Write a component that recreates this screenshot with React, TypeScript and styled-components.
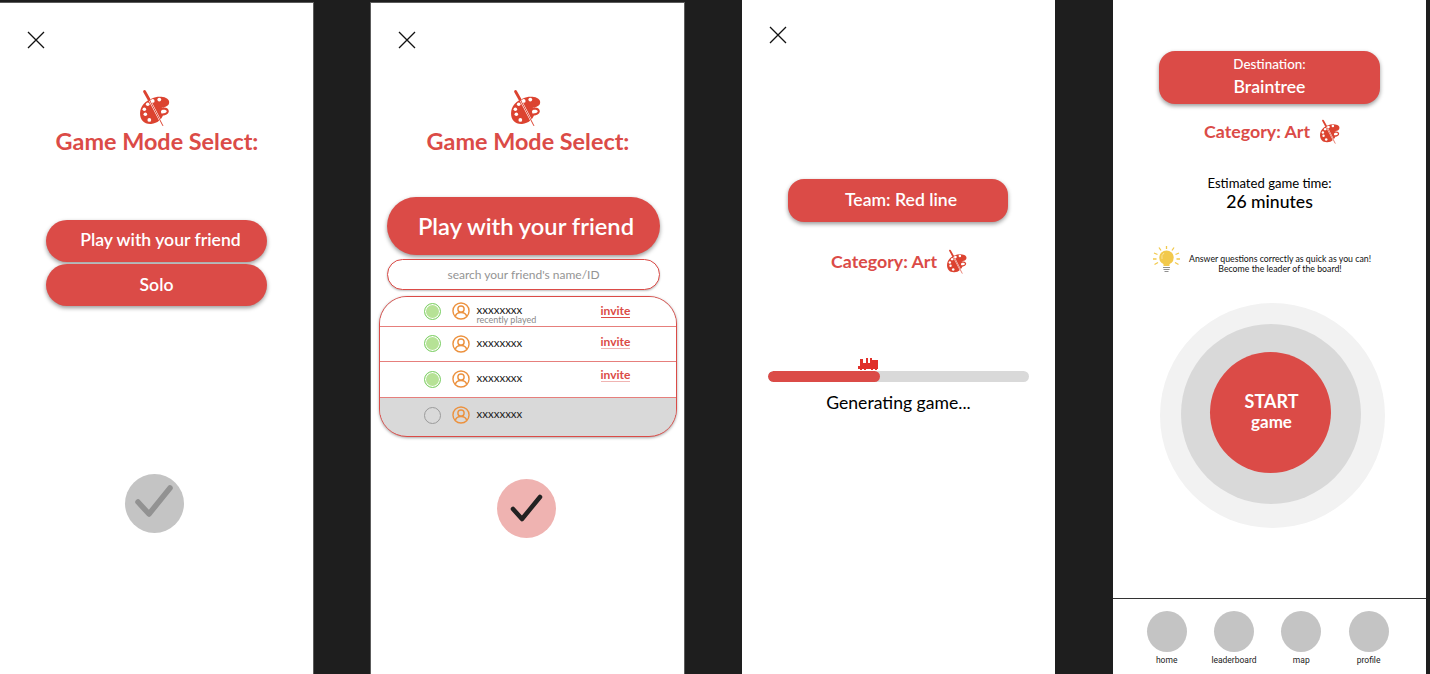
import styled, { createGlobalStyle } from "styled-components";

const RED = "#db4b47";

const GlobalStyle = createGlobalStyle`
  html, body {
    margin: 0;
    height: 674px;
    overflow: hidden;
    background: #1e1e1e;
    font-family: Lato, "Open Sans", sans-serif;
  }
`;

const Board = styled.div`
  display: flex;
  gap: 58px;
  width: 1430px;
  height: 674px;
  overflow: hidden;
`;

const Frame = styled.section<{ $top?: number }>`
  display: flex;
  flex-direction: column;
  width: 313px;
  height: ${(p) => 674 - (p.$top ?? 0)}px;
  margin-top: ${(p) => p.$top ?? 0}px;
  background: #fff;
  flex-shrink: 0;
  box-shadow: ${(p) => (p.$top ? "0 0 0 1px #5c5c5c" : "none")};
`;

const Close = styled.svg<{ $top: number }>`
  display: block;
  width: 18px;
  height: 18px;
  margin: ${(p) => p.$top}px 0 0 27px;
  flex-shrink: 0;
`;

const PaletteBox = styled.svg<{ $size: number; $nudge?: number }>`
  display: block;
  width: ${(p) => p.$size}px;
  height: ${(p) => p.$size * 1.23}px;
  margin-right: ${(p) => p.$nudge ?? 0}px;
  flex-shrink: 0;
`;

const Heading = styled.h1`
  margin: 0;
  font-size: 23.4px;
  line-height: 30px;
  font-weight: 700;
  color: ${RED};
  text-align: center;
`;

const Centered = styled.div<{ $top: number; $left?: number }>`
  display: flex;
  flex-direction: column;
  align-items: center;
  margin-top: ${(p) => p.$top}px;
  margin-left: ${(p) => p.$left ?? 0}px;
`;

const RedButton = styled.button<{
  $w: number;
  $h: number;
  $size?: number;
  $radius?: number;
  $lift?: number;
  $nudge?: number;
  $textShift?: number;
}>`
  display: flex;
  flex-direction: column;
  align-items: center;
  justify-content: center;
  width: ${(p) => p.$w}px;
  height: ${(p) => p.$h}px;
  margin-right: ${(p) => p.$nudge ?? 0}px;
  padding: 0 0 ${(p) => p.$lift ?? 0}px ${(p) => p.$textShift ?? 0}px;
  border: 0;
  border-radius: ${(p) => p.$radius ?? p.$h / 2}px;
  background: ${RED};
  color: #fff;
  font-family: inherit;
  font-size: ${(p) => p.$size ?? 17.6}px;
  font-weight: 600;
  box-shadow: 0 2px 4px rgba(0, 0, 0, 0.4);
`;

const Stack = styled.div`
  display: flex;
  flex-direction: column;
  gap: 2px;
`;

const CheckCircle = styled.div<{ $bg: string; $top: number; $nudge: number }>`
  width: 59px;
  height: 59px;
  margin-top: ${(p) => p.$top}px;
  margin-right: ${(p) => p.$nudge}px;
  border-radius: 50%;
  background: ${(p) => p.$bg};
`;

const Search = styled.div`
  display: flex;
  align-items: center;
  justify-content: center;
  width: 273px;
  height: 31px;
  box-sizing: border-box;
  margin: 4px 8px 0 0;
  border: 1px solid ${RED};
  border-radius: 16px;
  background: #fff;
  color: #949494;
  font-size: 12px;
  box-shadow: 0 1px 2px rgba(0, 0, 0, 0.25);
`;

const FriendList = styled.div`
  width: 298px;
  height: 141px;
  box-sizing: border-box;
  margin-top: 6px;
  border: 1px solid ${RED};
  border-radius: 28px;
  background: #d9d9d9;
  overflow: hidden;
  box-shadow: 0 1px 3px rgba(0, 0, 0, 0.35);
`;

const Row = styled.div<{ $h: number; $off?: boolean }>`
  display: flex;
  align-items: center;
  height: ${(p) => p.$h}px;
  box-sizing: border-box;
  padding-left: 44px;
  background: ${(p) => (p.$off ? "#d9d9d9" : "#fff")};
  border-bottom: ${(p) => (p.$off ? "0" : "1.5px solid #e67f7c")};
`;

const Dot = styled.span<{ $on?: boolean }>`
  width: 15px;
  height: 15px;
  border-radius: 50%;
  flex-shrink: 0;
  border: 1px solid ${(p) => (p.$on ? "#7fd06a" : "#9a9a9a")};
  background: ${(p) => (p.$on ? "#b6e296" : "transparent")};
  box-shadow: ${(p) => (p.$on ? "inset 0 0 0 1px #fff" : "none")};
`;

const Avatar = styled.svg`
  width: 18px;
  height: 18px;
  margin-left: 11px;
  flex-shrink: 0;
`;

const NameBlock = styled.div<{ $recent?: boolean }>`
  display: flex;
  flex-direction: column;
  width: 124px;
  margin-left: 7px;
  flex-shrink: 0;
  padding: ${(p) => (p.$recent ? "7px 0 0" : "0 0 2px")};
`;

const Name = styled.span`
  font-size: 11.5px;
  line-height: 10px;
  color: #222;
`;

const Recent = styled.span`
  font-size: 9px;
  line-height: 10px;
  color: #8a8a8a;
`;

const Invite = styled.span<{ $line: string; $shift: number }>`
  font-size: 12px;
  line-height: 12px;
  font-weight: 700;
  color: ${RED};
  border-bottom: 1px solid ${(p) => p.$line};
  transform: translateY(${(p) => p.$shift}px);
`;

const CategoryRow = styled.div<{ $top: number; $left: number }>`
  display: flex;
  align-items: center;
  gap: 10px;
  margin-top: ${(p) => p.$top}px;
  margin-left: ${(p) => p.$left}px;
`;

const CategoryText = styled.span`
  font-size: 17.8px;
  line-height: 22px;
  font-weight: 700;
  color: ${RED};
`;

const TrackArea = styled.div`
  display: flex;
  flex-direction: column;
  width: 261px;
  margin: 84px 0 0 26px;
`;

const Train = styled.svg`
  display: block;
  width: 20px;
  height: 13px;
  margin-left: 90px;
`;

const Track = styled.div`
  height: 11px;
  border-radius: 6px;
  background: #d9d9d9;
  overflow: hidden;
`;

const TrackFill = styled.div`
  height: 100%;
  border-radius: 6px;
  background: ${RED};
`;

const Generating = styled.div`
  margin-top: 10px;
  font-size: 17.6px;
  line-height: 22px;
  color: #000;
  text-align: center;
`;

const Small = styled.span`
  margin-bottom: 4px;
  font-size: 13.4px;
  line-height: 16px;
  font-weight: 500;
`;

const TimeBlock = styled.div`
  display: flex;
  flex-direction: column;
  align-items: center;
  margin: 30px 0 0 0;
  color: #000;
  font-size: 13.1px;
  line-height: 18px;
`;

const TimeValue = styled.strong`
  font-size: 17.6px;
  line-height: 20px;
  font-weight: 500;
`;

const Tip = styled.div`
  display: flex;
  align-items: flex-start;
  gap: 9px;
  margin: 34px 0 0 40px;
`;

const TipText = styled.p`
  margin: 0;
  padding-top: 8px;
  font-size: 8.75px;
  line-height: 10px;
  color: #111;
  text-align: center;
`;

const Ring = styled.div<{ $size: number; $bg: string }>`
  display: flex;
  align-items: center;
  justify-content: center;
  width: ${(p) => p.$size}px;
  height: ${(p) => p.$size}px;
  flex-shrink: 0;
  border-radius: 50%;
  background: ${(p) => p.$bg};
`;

const OuterRing = styled(Ring)`
  margin: 29px 0 0 47px;
`;

const MiddleRing = styled(Ring)`
  margin: 0 3px 3px 0;
`;

const Start = styled(Ring)`
  flex-direction: column;
  margin: 0 1px 3px 0;
  padding: 0 0 2px 2px;
  box-sizing: border-box;
  color: #fff;
  font-size: 18px;
  line-height: 22px;
  font-weight: 700;
`;

const StartSmall = styled.span`
  font-size: 17px;
  line-height: 20px;
`;

const Nav = styled.nav`
  display: flex;
  gap: 27.3px;
  margin-top: auto;
  height: 76px;
  padding: 12px 0 0 33.7px;
  box-sizing: border-box;
  border-top: 1px solid #333;
`;

const NavItem = styled.div`
  display: flex;
  flex-direction: column;
  align-items: center;
  width: 40px;
`;

const NavDot = styled.span`
  width: 40px;
  height: 41px;
  border-radius: 50%;
  background: #c4c4c4;
  flex-shrink: 0;
`;

const NavLabel = styled.span`
  margin-top: 3px;
  font-family: Roboto, sans-serif;
  font-size: 8.5px;
  line-height: 11px;
  color: #222;
  white-space: nowrap;
`;

function CloseIcon({ top }: { top: number }) {
  return (
    <Close $top={top} viewBox="0 0 18 18" fill="none" stroke="#111" strokeWidth="1.3">
      <path d="M1 1l16 16M17 1L1 17" />
    </Close>
  );
}

function Palette({ size, nudge }: { size: number; nudge?: number }) {
  return (
    <PaletteBox $size={size} $nudge={nudge} viewBox="0 0 30 37">
      <path
        fill="#dc4330"
        fillRule="evenodd"
        d="M12 9.500C16 7.500 22 7.400 26 9c3 1.200 4 4 2.700 6.500-1.300 2.300-4.500 2.500-7.200 3 3-.4 6.800.6 7.300 3.200.5 2.800-2.800 4.400-5.800 5-1.500 3.500-5 8-12 8.300C4 35.300 0 31 0 24.500 0 17 5.500 12 12 9.500zM22 21c-1.500.6-1 2.300-.5 3.600 2.200.2 5-.6 5.300-2.200.2-1.500-3-2-4.800-1.400z"
      />
      <path stroke="#fff" strokeWidth="2" d="M9 10l14 27" />
      <path stroke="#dc4330" strokeWidth="1" d="M9 10l14 27" fill="none" />
      <path stroke="#dc4330" strokeWidth="2.800" strokeLinecap="round" d="M4.500 2.500L9 10.500" />
      <g fill="#fff">
        <circle cx="19.300" cy="10.600" r="1.900" />
        <circle cx="12.700" cy="12" r="1.900" />
        <circle cx="7.700" cy="15.300" r="1.800" />
        <circle cx="4.300" cy="20.300" r="1.800" />
        <circle cx="5.300" cy="25.300" r="1.800" />
        <circle cx="9.300" cy="31" r="1.900" />
      </g>
    </PaletteBox>
  );
}

function Check({ color, d, width }: { color: string; d: string; width: number }) {
  return (
    <svg width="59" height="59" viewBox="0 0 59 59" fill="none">
      <path
        d={d}
        stroke={color}
        strokeWidth={width}
        strokeLinecap="round"
        strokeLinejoin="round"
      />
    </svg>
  );
}

function UserIcon() {
  return (
    <Avatar viewBox="0 0 19 19" fill="none" stroke="#ec923f" strokeWidth="1.500">
      <circle cx="9.500" cy="9.500" r="8.500" />
      <circle cx="9.500" cy="7.500" r="3.300" />
      <path d="M3.500 15.200c.6-2.800 3-4.200 6-4.200s5.400 1.400 6 4.200" />
    </Avatar>
  );
}

function Friend({
  h,
  on,
  off,
  recent,
  line,
  shift = 0,
}: {
  h: number;
  on?: boolean;
  off?: boolean;
  recent?: boolean;
  line?: string;
  shift?: number;
}) {
  return (
    <Row $h={h} $off={off}>
      <Dot $on={on} />
      <UserIcon />
      <NameBlock $recent={recent}>
        <Name>xxxxxxxx</Name>
        {recent && <Recent>recently played</Recent>}
      </NameBlock>
      {line && (
        <Invite $line={line} $shift={shift}>
          invite
        </Invite>
      )}
    </Row>
  );
}

function Bulb() {
  return (
    <svg width="27" height="28" viewBox="0 0 27 28" fill="none">
      <circle cx="13.500" cy="11.700" r="7.200" fill="#f2c94c" />
      <path d="M10.500 17h6v3h-6z" fill="#f2c94c" />
      <path d="M9 13a5.500 5.500 0 0 1 2-6" stroke="#f9e39a" strokeWidth="1" />
      <path d="M10 21.500h7M10.500 23.500h6M11.500 25.500h4" stroke="#8f8f8f" strokeWidth="1.200" />
      <path
        d="M13.500 0v3M6 1.500l2 3M21 1.500l-2 3M1 7l3.500 1.500M26 7l-3.500 1.500M0 13h3.500M27 13h-3.500M1.500 18.500l3.500-2M25.500 18.500l-3.500-2"
        stroke="#f2c94c"
        strokeWidth="1.300"
      />
    </svg>
  );
}

function TrainIcon() {
  return (
    <Train viewBox="0 0 20 13">
      <path
        fill="#e0302a"
        d="M2 1h3v4h3V0h2v5h2V0h2v2h6v9h-1v1h-2v-1h-2v1h-2v-1H8v1H6v-1H4v1H2v-1H0V8h2z"
      />
    </Train>
  );
}

export default function App() {
  const progress = 43;
  return (
    <>
      <GlobalStyle />
      <Board>
        <Frame $top={3}>
          <CloseIcon top={28} />
          <Centered $top={40} $left={1}>
            <Palette size={30} nudge={4} />
            <Heading>Game Mode Select:</Heading>
          </Centered>
          <Centered $top={64}>
            <Stack>
              <RedButton $w={221} $h={42} $lift={3} $textShift={8}>Play with your friend</RedButton>
              <RedButton $w={221} $h={42}>Solo</RedButton>
            </Stack>
            <CheckCircle $bg="#c4c4c4" $top={168} $nudge={4}>
              <Check color="#929292" width={5.500} d="M13 28l11 12 21-26" />
            </CheckCircle>
          </Centered>
        </Frame>

        <Frame $top={3}>
          <CloseIcon top={28} />
          <Centered $top={40} $left={1}>
            <Palette size={30} nudge={4} />
            <Heading>Game Mode Select:</Heading>
          </Centered>
          <Centered $top={41}>
            <RedButton $w={273} $h={58} $size={23.7} $nudge={8} $textShift={5}>
              Play with your friend
            </RedButton>
            <Search>search your friend's name/ID</Search>
            <FriendList>
              <Friend h={30} on recent line={RED} shift={0} />
              <Friend h={35} on line="#f0b4b2" shift={-1} />
              <Friend h={36} on line="#f0b4b2" shift={-4} />
              <Friend h={35} off />
            </FriendList>
            <CheckCircle $bg="#efb3b1" $top={42} $nudge={3}>
              <Check color="#222" width={4.500} d="M16 30l9 10 18-22" />
            </CheckCircle>
          </Centered>
        </Frame>

        <Frame>
          <CloseIcon top={26} />
          <Centered $top={135} $left={-1}>
            <RedButton $w={220} $h={43} $radius={16} $lift={2} $textShift={6}>
              Team: Red line
            </RedButton>
          </Centered>
          <CategoryRow $top={27} $left={89}>
            <CategoryText>Category: Art</CategoryText>
            <Palette size={20} />
          </CategoryRow>
          <TrackArea>
            <TrainIcon />
            <Track>
              <TrackFill style={{ width: `${progress}%` }} />
            </Track>
          </TrackArea>
          <Generating>Generating game...</Generating>
        </Frame>

        <Frame>
          <Centered $top={51}>
            <RedButton $w={221} $h={53} $radius={16} $lift={2}>
              <Small>Destination:</Small>
              Braintree
            </RedButton>
          </Centered>
          <CategoryRow $top={15} $left={91}>
            <CategoryText>Category: Art</CategoryText>
            <Palette size={20} />
          </CategoryRow>
          <TimeBlock>
            Estimated game time:
            <TimeValue>26 minutes</TimeValue>
          </TimeBlock>
          <Tip>
            <Bulb />
            <TipText>
              Answer questions correctly as quick as you can!
              <br />
              Become the leader of the board!
            </TipText>
          </Tip>
          <OuterRing $size={225} $bg="#f2f2f2">
            <MiddleRing $size={180} $bg="#d9d9d9">
              <Start $size={121} $bg={RED}>
                START
                <StartSmall>game</StartSmall>
              </Start>
            </MiddleRing>
          </OuterRing>
          <Nav>
            <NavItem>
              <NavDot />
              <NavLabel>home</NavLabel>
            </NavItem>
            <NavItem>
              <NavDot />
              <NavLabel>leaderboard</NavLabel>
            </NavItem>
            <NavItem>
              <NavDot />
              <NavLabel>map</NavLabel>
            </NavItem>
            <NavItem>
              <NavDot />
              <NavLabel>profile</NavLabel>
            </NavItem>
          </Nav>
        </Frame>
      </Board>
    </>
  );
}
